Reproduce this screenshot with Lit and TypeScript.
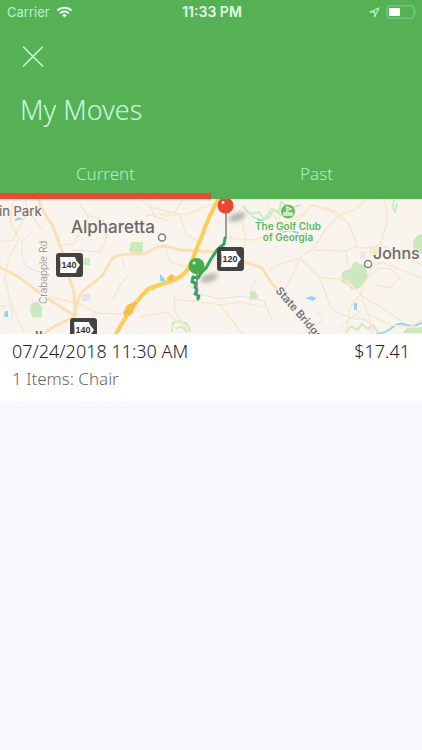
import { LitElement, html, css, svg } from "lit";
import { customElement, state } from "lit/decorators.js";

@customElement("status-bar")
class StatusBar extends LitElement {
  static styles = css`
    :host {
      display: grid;
      grid-template-columns: 1fr auto 1fr;
      align-items: center;
      height: 24px;
      padding: 0 5px 0 7px;
      color: #b8f4d0;
      font: 13px/16px Inter, "Liberation Sans", sans-serif;
    }
    .side { display: flex; align-items: center; gap: 6px; }
    .end { justify-content: flex-end; }
    .time { font-size: 14px; font-weight: 600; color: #e0fdea; }
    svg { display: block; }
  `;
  render() {
    return html`
      <div class="side">
        <span>Carrier</span>
        <svg width="17" height="12" viewBox="0 0 17 12" fill="none" stroke="#e4fff0" stroke-width="2">
          <path d="M1.4 4.6a10 10 0 0 1 14.2 0M4 7.4a6.4 6.4 0 0 1 9 0" />
          <path d="M8.5 11.6 6.2 9.2a3.3 3.3 0 0 1 4.6 0z" fill="#e4fff0" stroke="none" />
        </svg>
      </div>
      <span class="time">11:33 PM</span>
      <div class="side end">
        <svg width="11" height="11" viewBox="0 0 11 11" fill="none" stroke="#a9f0c6" stroke-width="1.3" stroke-linejoin="round">
          <path d="M10 1 1 5h4.6v4.8z" />
        </svg>
        <svg width="31" height="14" viewBox="0 0 31 14">
          <rect x="1" y=".8" width="27" height="12.4" rx="3" fill="none" stroke="#69cb83" stroke-width="1.4" />
          <rect x="3" y="3" width="11" height="8" rx="1" fill="#fff" />
          <path d="M29.4 5v4a2.5 2.5 0 0 0 0-4z" fill="#69cb83" />
        </svg>
      </div>
    `;
  }
}

const shield = (x: number, y: number, label: string) => svg`
  <g transform="translate(${x} ${y})">
    <rect width="27" height="24" rx="3" fill="#434343" />
    <path d="M4 4h15l1 3 4 5-3 4-1 4H4q1-8 0-16z" fill="#fff" />
    <text class="shield" x="13" y="15">${label}</text>
  </g>`;

@customElement("route-map")
class RouteMap extends LitElement {
  static styles = css`
    :host { display: block; overflow: hidden; }
    svg { display: block; width: 100%; }
    text { font-family: Inter, "Liberation Sans", sans-serif; fill: #777; }
    .halo { paint-order: stroke; stroke: #f9f5ee; stroke-width: 2px; }
    .city { font-size: 16px; font-weight: 500; fill: #6c6969; }
    .main { font-size: 17px; }
    .area { font-size: 13px; font-weight: 500; fill: #77737a; }
    .road { font-size: 10px; fill: #8b8888; }
    .bridge { font-size: 11px; font-weight: 600; fill: #777; }
    .club { font-size: 10px; font-weight: 600; fill: #5abb59; text-anchor: middle; }
    .shield { font-family: "Liberation Sans Narrow", "Liberation Sans", sans-serif; font-size: 9px; font-weight: 700; fill: #333; text-anchor: middle; }
    .line { fill: none; stroke-linecap: round; stroke-linejoin: round; }
  `;
  render() {
    return html`
      <svg viewBox="0 0 422 135" role="img" aria-label="Route map near Alpharetta">
        <defs>
          <filter id="soft" x="-50%" y="-50%" width="200%" height="200%"><feGaussianBlur stdDeviation="2" /></filter>
        </defs>
        <rect width="422" height="135" fill="#f9f5ee" />
        <g fill="#cbe9bd">
          <path d="M131 43h12v10l-5 2-9-3zM84 59h6v7h-7zM31 104l7-1 4 5v10l-9 1-3-6zM250 93l5-1 4 7-9 2zM342 73l8-3 5-8 10 5 3 10-8 12-8 2-4-5-7-3z" />
          <path d="M403 134h19v-6l-15 1zM413 42l5-6 4-1v20l-8-1z" />
        </g>
        <g class="line" stroke="#cdebc0" stroke-width="2">
          <path d="M243 7l7 8 9-2 5 7 8-10 7 3 2-10 9 6 10-3M252 17l8 5 9-4 4-7 8 5M394 1l-1 8 2 4 2-8M172 132l1-8 6-2 8 3 3 7M176 129l6-1 5 5M346 134l5-7 6 4 5-6 6 5 5-4 5 7" />
        </g>
        <g fill="#92d5ee">
          <path d="M5 112h3v6H4zM160 75l4 4 2 4-6-1zM305 99l6-2 6 2-4 3zM354 104h3v7h-3zM15 20l4-2 4 2-8 2zM257 19l7 2-5 4z" />
        </g>
        <path class="line" d="M278 34l12-3 8 3M377 135q10-1 17-8 7-4 12-1 8 2 16-2" stroke="#97d7ee" stroke-width="2" />
        <path d="M83 95l7-1v8h-8z" fill="#e5e6ec" />
        <path d="M360 52h6v8h-6z" fill="#f8e2e3" />
        <path d="M369 49l10-4 2 8-10 5z" fill="#fbe9c7" />
        <g class="line" stroke="#e5e1dc" stroke-width="1">
          <path d="M25 0q1 12 8 18l9 13M21 54q2 12 10 16l16 5M74 51l25 2 6-8 1-12M80 5l8 13-2 16M0 107h12v15M113 100l8-15 8-10M122 61l3 6M30 35l-8 7v11M188 86l12 9 20 5 22-3 22 5 8 18M210 59l20 14M256 80l-6 14M314 51l32 1 2 14M346 52l11-5M370 77l9-8 12 1 9 9-10 10-13-3M320 79l8 23q5 12 16 14l12 4q17-2 14 15M316 112q12 6 2 13l-16 10M340 128l10-8 10-8M364 98l18 11 20 14M150 5l4 12 15 5" />
        </g>
        <g class="line" stroke="#fae7c9" stroke-width="1.500">
          <path d="M13 0l-3 23 9 17-11 22-3 17 5 23 14 31M0 43l13-2 14-27 11-3M58 46l16-1 6-14 20 1 14-6 31 7M87 16l16 5 4 18M52 98l30 8 14 8 25 1M96 114l-20 21M145 17l30-4 9-13M141 0l9 8 29 7 8 21 12 7M162 17l26-2 26-11M166 51l4 12 26 7M140 118l27-5 20 18M174 95l1 18 13 19M174 101l22 1 24 4 23 29M220 106l20-3 22 5M242 22l4 18-5 21M229 39l24 2 27-6 23-18 7-11 22 7 11 9M267 4l12 22 28-13M269 72l8-6 23-7 14-10 11-18 14-15M300 59l-10 22-9 17M300 59l20 20 22 1 18 14 8 20 6 21M310 6q21 2 29 10l10 9 9 24 27-1 37 18M339 16l16-5 12-11M384 0q6 18 0 34l-5 17-18 43-11 15-4 26M370 69l12-6 24 10 16 6M346 80l13 14 12 9M368 115l22 11 20 2 12-7" />
        </g>
        <g class="line" stroke="#fae0b4" stroke-width="3">
          <path d="M38 0q7 18 14 25l10 27 8 29 4 12 1 24M0 68l17 9 16 12 20 14 22 14-20 10-12 8M75 117q2-17 7-24l20-16 10-17q5-6 33-5l12-7q10-2 23 3l37 2 26 9 19 7 10 16 12 12" />
        </g>
        <path class="line" d="M115 137q6-12 13-22 8-13 20-25l20-7q18-5 23-19l12-30q5-15 15-33" stroke="#fcce58" stroke-width="4" />
        <path d="M123 114l4-8 9-4 1 2-5 11-7 3zM166 80l5-5 4 2-4 5z" fill="#f9bf45" />
        <text class="area" x="-1" y="17">in Park</text>
        <text class="city main halo" x="71" y="34">Alpharetta</text>
        <text class="road halo" transform="translate(47 105) rotate(-90)">Crabapple Rd</text>
        <text class="club halo" x="288" y="31">The Golf Club</text>
        <text class="club halo" x="288" y="42">of Georgia</text>
        <text class="city halo" x="373" y="60">Johns</text>
        <text class="bridge halo" transform="translate(275 92) rotate(49)">State Bridge</text>
        <text class="city" x="-16" y="144">Roswell</text>
        <g fill="#fff" stroke="#858080" stroke-width="1.500"><circle cx="162" cy="38.500" r="3.500" /><circle cx="368" cy="65" r="3.500" /></g>
        <circle cx="288" cy="12.500" r="7" fill="#66bf61" />
        <path d="M284 14h8v2h-8zM287 14V8l4 2-4 2" fill="none" stroke="#e9f8e4" stroke-width="1.300" />
        ${shield(56, 54, "140")} ${shield(70, 119, "140")}
        <path class="line" d="M225 39l-1 6-7 6-6 9-5 9-5 5-3 5-5-1-1 5 4 1-1 4 2 3-2 4 4 2-1 3" stroke="#30a95c" stroke-width="3" />
        ${shield(217, 48, "120")}
        <g fill="#676360" opacity=".45" filter="url(#soft)">
          <ellipse cx="237" cy="18" rx="9" ry="4" transform="rotate(-18 237 18)" />
          <ellipse cx="209" cy="79" rx="9" ry="4" transform="rotate(-18 209 79)" />
        </g>
        <path class="line" d="M226 12v27M197 74v24" stroke="#818181" stroke-width="1.500" />
        <circle cx="225.500" cy="6.500" r="8" fill="#ee432d" />
        <circle cx="196.500" cy="67" r="8" fill="#48ad4b" />
        <g fill="#fff" opacity=".9"><circle cx="223" cy="3.500" r="1.500" /><circle cx="194" cy="64" r="1.500" /></g>
      </svg>
    `;
  }
}

@customElement("app-root")
class AppRoot extends LitElement {
  static styles = css`
    :host {
      display: block;
      min-height: 100vh;
      background: #f7f7fd;
      font-family: "Noto Sans", "Open Sans", sans-serif;
      font-weight: 300;
    }
    button { font: inherit; border: 0; padding: 0; background: none; cursor: pointer; }
    header { background: #55b153; }
    .close { display: block; margin: 20px 0 0 21px; width: 24px; height: 24px; }
    .close svg { display: block; }
    h1 { margin: 24px 0 0; padding: 0 20px; font-size: 27px; line-height: 36px; font-weight: 300; color: #c9fbe0; }
    .tabs { display: grid; grid-template-columns: 1fr 1fr; margin-top: 20px; }
    .tab { height: 51px; padding-top: 7px; font-size: 17px; line-height: 24px; color: #a6f1c7; border-bottom: 6px solid transparent; }
    .tab[aria-selected="true"] { border-color: #ee4930; }
    .move { background: #fff; }
    .details { padding: 4px 12px 9px; }
    .row { display: flex; justify-content: space-between; font-size: 18px; line-height: 26px; color: #222; }
    .items { margin: 2px 0 0; font-size: 17px; line-height: 26px; color: #666; }
  `;

  @state() private tab = "Current";

  render() {
    return html`
      <header>
        <status-bar></status-bar>
        <button class="close" aria-label="Close">
          <svg width="24" height="24" viewBox="0 0 24 24" stroke="#c9fbe0" stroke-width="1.500" stroke-linecap="round">
            <path d="M2.500 3 21.500 22M21.500 3 2.500 22" />
          </svg>
        </button>
        <h1>My Moves</h1>
        <div class="tabs" role="tablist">
          ${["Current", "Past"].map(
            (name) => html`<button class="tab" role="tab" aria-selected=${this.tab === name ? "true" : "false"} @click=${() => (this.tab = name)}>${name}</button>`
          )}
        </div>
      </header>
      <main>
        <article class="move">
          <route-map></route-map>
          <div class="details">
            <div class="row"><time datetime="2018-07-24T11:30">07/24/2018 11:30 AM</time><span>$17.41</span></div>
            <p class="items">1 Items: Chair</p>
          </div>
        </article>
      </main>
    `;
  }
}
